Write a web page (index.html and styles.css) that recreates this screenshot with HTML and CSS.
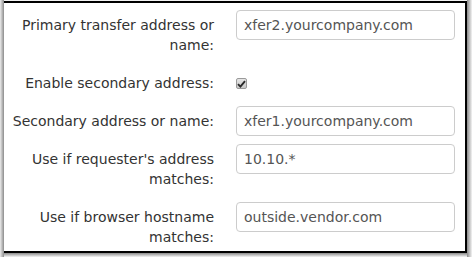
FILE: index.html
```html
<!DOCTYPE html>
<html>
<head>
<meta charset="utf-8">
<link rel="stylesheet" href="styles.css">
</head>
<body>
<div class="frame">
  <div class="panel">
    <form class="form">
      <div class="row">
        <label class="label">Primary transfer address or name:</label>
        <div class="control"><div class="input">xfer2.yourcompany.com</div></div>
      </div>
      <div class="row">
        <label class="label">Enable secondary address:</label>
        <div class="control check-cell">
          <span class="checkbox"><svg width="9" height="8" viewBox="0 0 9 8"><path d="M1 4.2 L3.4 6.6 L8 1.2" fill="none" stroke="#2a2a2a" stroke-width="1.9"/></svg></span>
        </div>
      </div>
      <div class="row">
        <label class="label">Secondary address or name:</label>
        <div class="control"><div class="input">xfer1.yourcompany.com</div></div>
      </div>
      <div class="row">
        <label class="label">Use if requester's address matches:</label>
        <div class="control"><div class="input">10.10.*</div></div>
      </div>
      <div class="row">
        <label class="label">Use if browser hostname matches:</label>
        <div class="control"><div class="input">outside.vendor.com</div></div>
      </div>
    </form>
  </div>
</div>
</body>
</html>
```
FILE: styles.css
```css
html, body {
  margin: 0;
  padding: 0;
  background: #ffffff;
}
.frame {
  width: 472px;
  height: 257px;
  box-sizing: border-box;
  padding: 1px 5px 4px 4px;
  background:
    linear-gradient(to right, #ececec, #8c8c8c) left top / 4px 100% no-repeat,
    linear-gradient(to right, #8a8a8a, #f4f4f4) right top / 5px 100% no-repeat,
    linear-gradient(to bottom, #8a8a8a, #f4f4f4) left bottom / 100% 4px no-repeat,
    #f2f2f2;
}
.panel {
  height: 100%;
  box-sizing: border-box;
  background: #ffffff;
  border-top: 2px solid #000;
  border-right: 2px solid #000;
  border-bottom: 2px solid #000;
  padding: 7px 10px 0 8px;
  font-family: "DejaVu Sans", Verdana, sans-serif;
  font-size: 14px;
}
.form {
  display: flex;
  flex-direction: column;
  gap: 8px;
}
.row {
  display: grid;
  grid-template-columns: 202px 219px;
  column-gap: 22px;
  align-items: start;
}
.label {
  text-align: right;
  color: #333333;
  line-height: 20px;
  padding: 5px 0;
}
.input {
  height: 30px;
  box-sizing: border-box;
  border: 1px solid #cccccc;
  border-radius: 4px;
  padding: 0 7px;
  line-height: 28px;
  color: #555555;
  font-size: 14px;
}
.check-cell {
  padding-top: 10px;
}
.checkbox {
  display: flex;
  align-items: center;
  justify-content: center;
  width: 11px;
  height: 11px;
  box-sizing: border-box;
  border: 1px solid #9a9a9a;
  border-radius: 2px;
  background: linear-gradient(#e6e6e6, #c9c9c9);
}
```
